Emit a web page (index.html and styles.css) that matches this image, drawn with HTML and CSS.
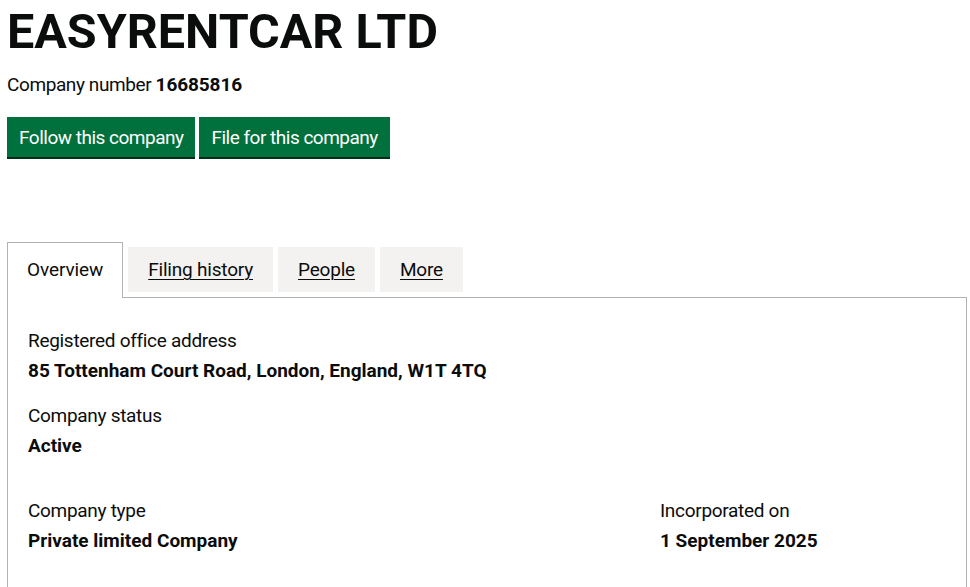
FILE: index.html
```html
<!DOCTYPE html>
<html lang="en">
<head>
<meta charset="utf-8">
<title>EASYRENTCAR LTD - Companies House</title>
<link rel="stylesheet" href="styles.css">
</head>
<body>
<main class="page">
  <h1 class="heading">EASYRENTCAR LTD</h1>
  <p class="company-number">Company number <strong>16685816</strong></p>
  <div class="actions">
    <a class="button" href="#">Follow this company</a>
    <a class="button" href="#">File for this company</a>
  </div>
  <div class="tabs">
    <ul class="tab-list">
      <li class="tab tab-selected"><span class="tab-link">Overview</span></li>
      <li class="tab"><a class="tab-link" href="#">Filing history</a></li>
      <li class="tab"><a class="tab-link" href="#">People</a></li>
      <li class="tab"><a class="tab-link" href="#">More</a></li>
    </ul>
    <div class="panel">
      <dl class="field">
        <dt class="label">Registered office address</dt>
        <dd class="value">85 Tottenham Court Road, London, England, W1T 4TQ</dd>
      </dl>
      <dl class="field">
        <dt class="label">Company status</dt>
        <dd class="value">Active</dd>
      </dl>
      <div class="row">
        <dl class="field col-two-thirds">
          <dt class="label">Company type</dt>
          <dd class="value">Private limited Company</dd>
        </dl>
        <dl class="field col-one-third">
          <dt class="label">Incorporated on</dt>
          <dd class="value">1 September 2025</dd>
        </dl>
      </div>
    </div>
  </div>
</main>
</body>
</html>
```
FILE: styles.css
```css
* { box-sizing: border-box; }

html, body {
  margin: 0;
  padding: 0;
  background: #ffffff;
}

body {
  color: #0b0c0c;
  font-family: Roboto, "Liberation Sans", Arial, sans-serif;
  font-size: 19px;
  line-height: 25px;
}

.page {
  padding: 0 3px 0 7px;
}

.heading {
  margin: 7px 0 0;
  font-size: 48.5px;
  line-height: 50px;
  font-weight: 700;
}

.company-number {
  margin: 15px 0 0;
  font-size: 19px;
  line-height: 25px;
  letter-spacing: -0.4px;
}

.company-number strong {
  font-weight: 700;
  letter-spacing: -0.1px;
}

.actions {
  display: flex;
  gap: 4px;
  margin-top: 20px;
}

.button {
  display: inline-block;
  padding: 8px 10px 7px;
  border: 2px solid transparent;
  background: #00703c;
  color: #ffffff;
  font-size: 19px;
  line-height: 21px;
  letter-spacing: -0.5px;
  text-decoration: none;
  box-shadow: 0 2px 0 #002d18;
}

.tabs {
  margin-top: 90px;
}

.tab-list {
  display: flex;
  align-items: flex-start;
  margin: 0;
  padding: 0;
  list-style: none;
  border-bottom: 1px solid #b1b4b6;
}

.tab {
  margin-right: 5px;
  padding: 10px 20px;
  background: #f3f2f1;
}

.tab-selected {
  position: relative;
  z-index: 1;
  margin-top: -5px;
  margin-bottom: -1px;
  padding: 14px 19px 16px;
  border: 1px solid #b1b4b6;
  border-bottom: 0;
  background: #ffffff;
}

.tab-link {
  display: block;
  color: #0b0c0c;
  font-size: 19px;
  line-height: 25px;
  letter-spacing: -0.2px;
  text-decoration: underline;
  text-decoration-thickness: 1px;
  text-underline-offset: 3px;
}

.tab-selected .tab-link {
  text-decoration: none;
  letter-spacing: -0.1px;
}

.panel {
  padding: 30px 20px;
  border: 1px solid #b1b4b6;
  border-top: 0;
}

.field {
  margin: 0 0 20px;
}

.label {
  margin: 0;
  font-weight: 400;
  letter-spacing: -0.3px;
}

.value {
  margin: 5px 0 0;
  font-weight: 700;
}

.row {
  display: flex;
  margin: 40px -15px 0;
}

.col-two-thirds {
  flex: 0 0 66.6667%;
  padding: 0 15px;
}

.col-one-third {
  flex: 0 0 33.3333%;
  padding: 0 15px;
}
```
